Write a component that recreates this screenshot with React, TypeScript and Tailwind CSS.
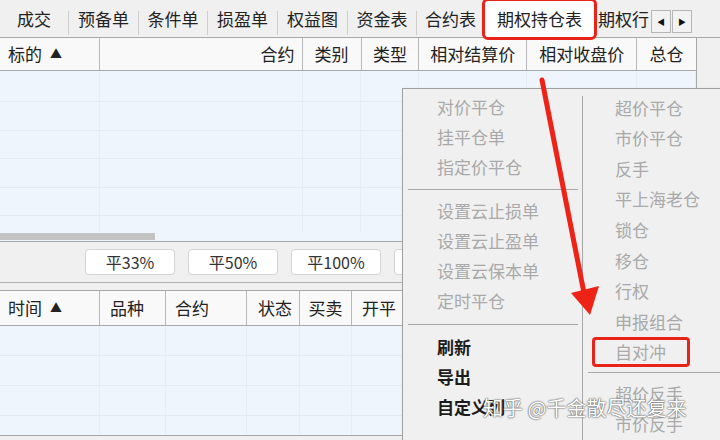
import React from "react";

const FONT = "font-['Noto_Sans_CJK_SC','Noto_Sans',sans-serif]";

function Sep() {
  return <div className="w-px h-[24px] bg-[#cdcdcd] self-end mb-[2px]" />;
}

function Tab({ label, w, selected }: { label: string; w: number; selected?: boolean }) {
  return (
    <div
      className={`h-full flex items-center justify-center text-[17px] text-[#222] ${selected ? "bg-white" : ""}`}
      style={{ width: w }}
    >
      {label}
    </div>
  );
}

const body1Cols = [100, 203, 59, 58, 108, 110, 59];
const body2Cols = [100, 66, 81, 53, 52, 368];

function Grid({ cols, rows, rowH, firstH }: { cols: number[]; rows: number; rowH: number; firstH: number }) {
  return (
    <div className="flex flex-col">
      {Array.from({ length: rows }).map((_, r) => (
        <div key={r} className="flex border-b border-[#e3ebf3]" style={{ height: r === 0 ? firstH : rowH }}>
          {cols.map((c, i) => (
            <div key={i} className="border-r border-[#e6edf4] h-full" style={{ width: c }} />
          ))}
        </div>
      ))}
    </div>
  );
}

function MItem({ label, on, h = 30 }: { label: string; on?: boolean; h?: number }) {
  return (
    <div
      className={`flex items-center text-[17px] ${on ? "text-[#1c1c1c] font-semibold" : "text-[#a9a9a9]"}`}
      style={{ height: h }}
    >
      {label}
    </div>
  );
}

export default function App() {
  return (
    <div className={`relative w-[720px] h-[440px] overflow-hidden bg-[#f0f0f0] ${FONT}`}>
      {/* Tab bar */}
      <div className="h-[38px] flex items-stretch border-b border-[#a8a8a8] bg-[#f0f0f0]">
        <Tab label="成交" w={68} />
        <Sep />
        <Tab label="预备单" w={69} />
        <Sep />
        <Tab label="条件单" w={68} />
        <Sep />
        <Tab label="损盈单" w={69} />
        <Sep />
        <Tab label="权益图" w={69} />
        <Sep />
        <Tab label="资金表" w={68} />
        <Sep />
        <Tab label="合约表" w={67} />
        <Tab label="期权持仓表" w={111} selected />
        <div className="h-full flex items-center pl-[3px] text-[17px] text-[#222] w-[56px] overflow-hidden whitespace-nowrap">期权行</div>
        <div className="flex items-start pt-[10px] gap-[1px]">
          <div className="w-[20px] h-[23px] border border-[#b5b5b5] bg-[#f2f2f2] flex items-center justify-center text-[8px] text-[#111]">◀</div>
          <div className="w-[20px] h-[23px] border border-[#b5b5b5] bg-[#f2f2f2] flex items-center justify-center text-[8px] text-[#111]">▶</div>
        </div>
      </div>

      {/* Top table */}
      <div className="flex">
        <div className="w-[697px] flex flex-col border-r border-[#a8a8a8]">
          <div className="h-[33px] flex bg-[#f9f9f9] border-b border-[#a8a8a8] text-[17px] text-[#222]">
            <div className="w-[100px] border-r border-[#b8b8b8] flex items-center pl-[8px] gap-[8px]">标的<span className="text-[12px]">▲</span></div>
            <div className="w-[203px] border-r border-[#b8b8b8] flex items-center justify-end pr-[7px]">合约</div>
            <div className="w-[59px] border-r border-[#b8b8b8] flex items-center justify-center">类别</div>
            <div className="w-[58px] border-r border-[#b8b8b8] flex items-center justify-center">类型</div>
            <div className="w-[108px] border-r border-[#b8b8b8] flex items-center justify-center">相对结算价</div>
            <div className="w-[110px] border-r border-[#b8b8b8] flex items-center justify-center">相对收盘价</div>
            <div className="w-[59px] flex items-center justify-center">总仓</div>
          </div>
          <div className="h-[161px] bg-[#eef5fd] overflow-hidden">
            <Grid cols={body1Cols} rows={6} rowH={28.5} firstH={31} />
          </div>
          <div className="h-[10px] bg-[#eef5fd] flex items-start pt-[1px] border-b border-[#a8a8a8]">
            <div className="w-[155px] h-[7px] bg-[#c3c3c3]" />
          </div>
        </div>
        <div className="flex-1 bg-[#f0f0f0]" />
      </div>

      {/* Buttons row */}
      <div className="h-[41px] flex items-center pl-[85px] gap-[13px] border-b border-[#b0b0b0]">
        {["平33%", "平50%", "平100%", "平"].map((b) => (
          <div key={b} className="w-[90px] h-[26px] bg-white border border-[#d4d4d4] rounded-[4px] flex items-center justify-center text-[16px] text-[#333] shrink-0">
            {b}
          </div>
        ))}
      </div>
      <div className="h-[7px]" />

      {/* Bottom table */}
      <div className="border-t border-[#a8a8a8]">
        <div className="h-[35px] flex bg-[#f9f9f9] border-b border-[#a8a8a8] text-[17px] text-[#222]">
          <div className="w-[100px] border-r border-[#b8b8b8] flex items-center pl-[8px] gap-[8px]">时间<span className="text-[12px]">▲</span></div>
          <div className="w-[66px] border-r border-[#b8b8b8] flex items-center pl-[10px]">品种</div>
          <div className="w-[81px] border-r border-[#b8b8b8] flex items-center pl-[9px]">合约</div>
          <div className="w-[53px] border-r border-[#b8b8b8] flex items-center justify-end pr-[7px]">状态</div>
          <div className="w-[52px] border-r border-[#b8b8b8] flex items-center justify-center">买卖</div>
          <div className="flex-1 flex items-center pl-[10px]">开平</div>
        </div>
        <div className="h-[110px] bg-[#eef5fd] border-b border-[#a8a8a8] overflow-hidden">
          <Grid cols={body2Cols} rows={4} rowH={30} firstH={30} />
        </div>
      </div>

      {/* Context menu */}
      <div className="absolute left-[402px] top-[88px] w-[340px] h-[370px] bg-[#f0f0f0] border border-[#a0a0a0] shadow-[2px_2px_4px_rgba(0,0,0,0.15)] flex">
        <div className="w-[179px] flex flex-col pt-[3px]">
          <div className="pl-[34px]">
            <MItem label="对价平仓" />
            <MItem label="挂平仓单" />
            <MItem label="指定价平仓" />
          </div>
          <div className="h-[14px] flex items-center ml-[5px] mr-[4px]"><div className="h-px w-full bg-[#a8a8a8]" /></div>
          <div className="pl-[34px]">
            <MItem label="设置云止损单" />
            <MItem label="设置云止盈单" />
            <MItem label="设置云保本单" />
            <MItem label="定时平仓" />
          </div>
          <div className="h-[16px] flex items-center ml-[5px] mr-[4px]"><div className="h-px w-full bg-[#a8a8a8]" /></div>
          <div className="pl-[34px]">
            <MItem label="刷新" on />
            <MItem label="导出" on />
            <MItem label="自定义列" on />
          </div>
        </div>
        <div className="w-px bg-[#a8a8a8] mt-[7px]" />
        <div className="flex-1 flex flex-col pt-[3px]">
          <div className="pl-[32px]">
            {["超价平仓", "市价平仓", "反手", "平上海老仓", "锁仓", "移仓", "行权", "申报组合", "自对冲"].map((l) => (
              <MItem key={l} label={l} h={30.6} />
            ))}
          </div>
          <div className="h-[11px] flex items-center ml-[5px]"><div className="h-px w-full bg-[#a8a8a8]" /></div>
          <div className="pl-[32px]">
            <MItem label="超价反手" h={30.6} />
            <MItem label="市价反手" h={30.6} />
          </div>
        </div>
      </div>

      {/* Red highlight boxes */}
      <div className="absolute left-[482px] top-[-2px] w-[115px] h-[42px] border-[3px] border-[#e8241a] rounded-[6px]" />
      <div className="absolute left-[592px] top-[337px] w-[98px] h-[30px] border-[3px] border-[#e8241a] rounded-[4px]" />

      {/* Red arrow */}
      <svg className="absolute left-0 top-0 pointer-events-none" width="720" height="440" viewBox="0 0 720 440">
        <line x1="542" y1="80" x2="584" y2="293" stroke="#ee2216" strokeWidth="5" strokeLinecap="round" />
        <polygon points="571,293 599,286 590,315" fill="#ee2216" />
      </svg>

      {/* Watermark */}
      <div className="absolute left-[483px] top-[393px] text-[20px] text-white whitespace-nowrap [text-shadow:0_0_1px_#444,0_0_2px_#555] font-['Noto_Sans_CJK_SC',sans-serif]">
        知乎 @千金散尽还复来
      </div>
    </div>
  );
}
